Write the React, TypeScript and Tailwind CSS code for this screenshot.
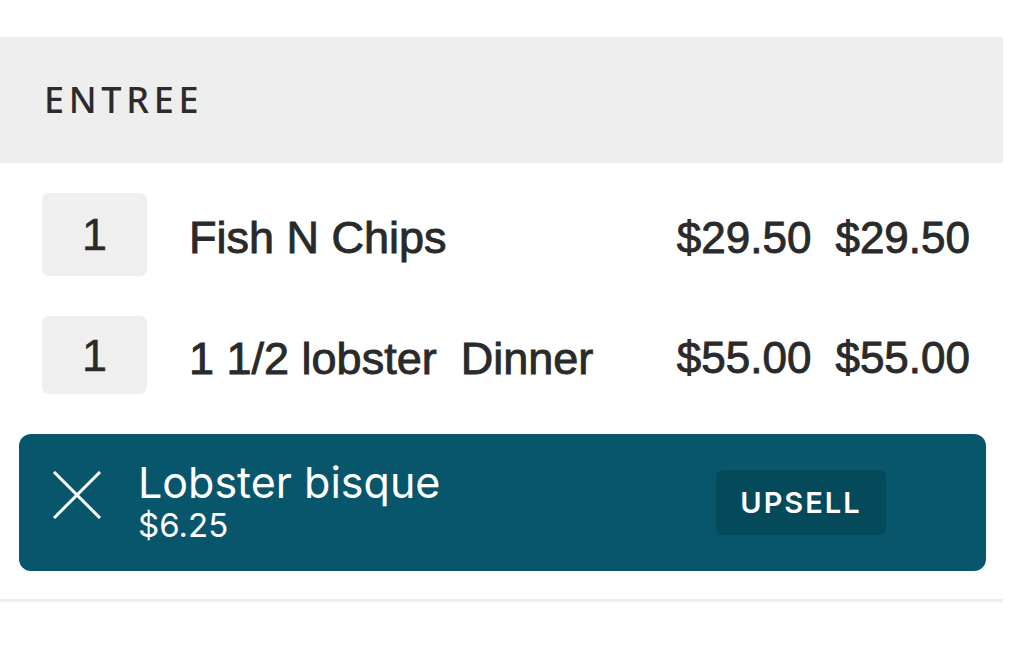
import React from "react";

const sans = { fontFamily: '"Liberation Sans", Arial, sans-serif' };

function Row({ name, price, total, h }: { name: React.ReactNode; price: string; total: string; h: string }) {
  return (
    <div className={`flex items-center pl-[42px] pr-[33px] text-[#2a2a2a] ${h}`} style={sans}>
      <div
        className={`w-[105px] ${h} rounded-[7px] bg-[#efefef] flex items-center justify-center text-[45px] leading-none [-webkit-text-stroke:0.5px_#2a2a2a]`}
      >
        1
      </div>
      <div className="ml-[42px] text-[45px] leading-none whitespace-pre pt-[6px] [-webkit-text-stroke:0.9px_#2a2a2a]">
        {name}
      </div>
      <div className="flex-1" />
      <div className="flex gap-[24px] text-[44px] leading-none pt-[6px] [-webkit-text-stroke:0.9px_#2a2a2a]">
        <span>{price}</span>
        <span>{total}</span>
      </div>
    </div>
  );
}

export default function App() {
  return (
    <div className="w-[1023px] h-[669px] bg-white overflow-hidden">
      <div className="w-[1003px] pt-[37px]">
        <div
          className="h-[126px] bg-[#eeeeee] flex items-center pl-[44px] text-[36px] font-medium tracking-[0.13em] text-[#2b2b2b]"
          style={{ fontFamily: '"Noto Sans", "Open Sans", sans-serif' }}
        >
          ENTREE
        </div>
        <div className="pt-[30px] flex flex-col gap-[40px]">
          <Row name="Fish N Chips" price="$29.50" total="$29.50" h="h-[83px]" />
          <Row
            name={
              <span>
                1 1/2 lobster<span className="inline-block w-[24px]" />Dinner
              </span>
            }
            price="$55.00"
            total="$55.00"
            h="h-[78px]"
          />
        </div>
        <div
          className="mt-[40px] ml-[19px] w-[967px] h-[137px] rounded-[12px] bg-[#07566b] flex items-center text-white"
          style={{ fontFamily: 'Inter, "Noto Sans", sans-serif' }}
        >
          <svg className="ml-[33px] w-[50px] h-[48px] -mt-[16px]" viewBox="0 0 50 48" fill="none">
            <path d="M2 1 L48 47 M48 1 L2 47" stroke="white" strokeWidth="3" />
          </svg>
          <div className="ml-[36px] flex flex-col -mt-[2px]">
            <div className="text-[43px] leading-[46px]">Lobster bisque</div>
            <div className="text-[33px] leading-[40px]">$6.25</div>
          </div>
          <div className="flex-1" />
          <div className="mr-[100px] w-[170px] h-[65px] rounded-[7px] bg-[#054a5a] flex items-center justify-center text-[29px] font-semibold tracking-[0.07em]">
            UPSELL
          </div>
        </div>
        <div className="mt-[28px] h-[3px] bg-[#eeeeee]" />
      </div>
    </div>
  );
}
